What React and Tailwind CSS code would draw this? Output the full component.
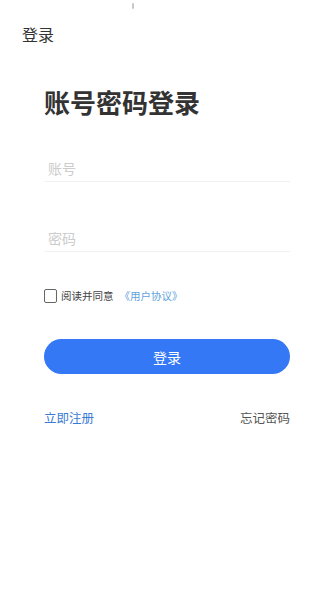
import React from "react";

export default function App() {
  const font = { fontFamily: '"Noto Sans CJK SC", "Noto Sans", sans-serif' };
  return (
    <div className="w-[334px] h-[590px] bg-white flex flex-col" style={font}>
      <div className="h-[26px] pt-[3px] pl-[132px]">
        <div className="w-[2px] h-[6px] bg-[#c8c8c8] rounded-full"></div>
      </div>
      <div className="pl-[22px] text-[16px] leading-none text-[#333333]">登录</div>
      <div className="px-[44px] flex flex-col">
        <div className="mt-[47px] text-[26px] leading-none font-bold text-[#333333] tracking-[0px]">
          账号密码登录
        </div>
        <div className="mt-[46px] pl-[4px] pb-[6px] border-b border-[#f1f1f1] text-[14px] leading-none text-[#cccccc]">
          账号
        </div>
        <div className="mt-[49px] pl-[4px] pb-[6px] border-b border-[#f1f1f1] text-[14px] leading-none text-[#cccccc]">
          密码
        </div>
        <div className="mt-[37px] flex items-center h-[14px]">
          <div className="w-[13px] h-[14px] border border-[#666666] rounded-[2px]"></div>
          <span className="ml-[4px] text-[10.5px] leading-none text-[#444444]">阅读并同意</span>
          <span className="ml-[6px] text-[10.5px] leading-none text-[#5fa3dc]">《用户协议》</span>
        </div>
        <div className="mt-[36px] h-[35px] rounded-full bg-[#3478f6] flex items-center justify-center text-white text-[14px] leading-none">
          登录
        </div>
        <div className="mt-[38px] flex justify-between text-[12.5px] leading-none">
          <span className="text-[#3a7bd5]">立即注册</span>
          <span className="text-[#555555]">忘记密码</span>
        </div>
      </div>
    </div>
  );
}
